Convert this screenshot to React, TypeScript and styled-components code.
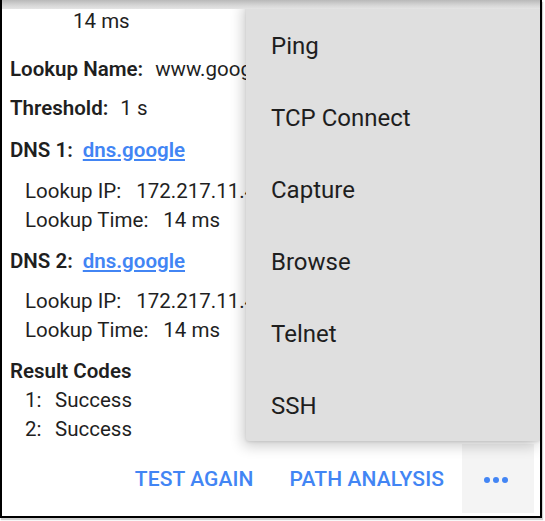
import React from 'react';
import styled, { createGlobalStyle } from 'styled-components';

const GlobalStyle = createGlobalStyle`
  html, body {
    margin: 0;
    padding: 0;
    background: #ffffff;
  }
  body {
    font-family: Roboto, "Liberation Sans", Arial, sans-serif;
    color: #1f1f1f;
  }
`;

const Page = styled.div`
  width: 545px;
  height: 521px;
  overflow: hidden;
  background: #ffffff;
`;

const Frame = styled.div`
  position: relative;
  box-sizing: border-box;
  width: 542px;
  height: 518px;
  border: 2px solid #000;
  border-top: none;
  box-shadow: 1px 2px 1px rgba(0, 0, 0, 0.18);
  display: flex;
  flex-direction: column;
  overflow: hidden;
  background: #fff;
`;

const TopShadow = styled.div`
  position: absolute;
  top: 0;
  left: -2px;
  right: -2px;
  height: 9px;
  z-index: 3;
  background: linear-gradient(#b9b9b9, #d6d6d6 60%, #e4e4e4);
`;

const Details = styled.div`
  padding: 7px 0 0 8px;
  font-size: 20.5px;
  line-height: 29px;
  white-space: nowrap;
`;

const Line = styled.div<{ $indent?: number; $gap?: number }>`
  padding-left: ${(p) => p.$indent ?? 0}px;
  margin-top: ${(p) => p.$gap ?? 0}px;
`;

const Label = styled.span`
  font-weight: 600;
  margin-right: 12px;
`;

const Key = styled.span`
  margin-right: 15px;
`;

const DnsLink = styled.a`
  color: #4285f4;
  font-weight: 600;
  margin-left: -2px;
  text-decoration: underline;
  text-underline-offset: 2px;
`;

const CodeNum = styled.span`
  display: inline-block;
  width: 30px;
`;

const Footer = styled.div`
  margin-top: auto;
  margin-bottom: 3px;
  display: flex;
  justify-content: flex-end;
  padding-right: 6px;
  height: 71px;
`;

const TextButton = styled.button`
  border: none;
  background: transparent;
  padding: 0 18px;
  font-family: Roboto, "Liberation Sans", Arial, sans-serif;
  font-size: 21px;
  font-weight: 500;
  color: #4285f4;
  letter-spacing: 0.1px;
`;

const MoreButton = styled.button`
  width: 72px;
  border: none;
  background: #f4f4f4;
  display: flex;
  align-items: center;
  justify-content: center;
  gap: 3px;
  padding: 2px 4px 0 0;
`;

const Dot = styled.span`
  width: 6px;
  height: 6px;
  border-radius: 50%;
  background: #4285f4;
`;

const Menu = styled.div`
  position: absolute;
  top: 0;
  left: 244px;
  right: 0;
  height: 441px;
  padding-top: 10px;
  box-sizing: border-box;
  background: #dfdfdf;
  border-radius: 0 0 0 3px;
  box-shadow: -3px 5px 14px rgba(0, 0, 0, 0.2), 0 1px 3px rgba(0, 0, 0, 0.1);
  z-index: 2;
`;

const MenuItem = styled.div`
  height: 72px;
  display: flex;
  align-items: center;
  padding-left: 25px;
  font-size: 24px;
  color: #1e1e1e;
`;

const menuItems = ['Ping', 'TCP Connect', 'Capture', 'Browse', 'Telnet', 'SSH'];

export default function App() {
  return (
    <Page>
      <GlobalStyle />
      <Frame>
        <TopShadow />
        <Details>
          <Line $indent={63}>14 ms</Line>
          <Line $gap={19}>
            <Label>Lookup Name:</Label>www.google.com
          </Line>
          <Line $gap={10}>
            <Label>Threshold:</Label>1 s
          </Line>
          <Line $gap={13}>
            <Label>DNS 1:</Label>
            <DnsLink>dns.google</DnsLink>
          </Line>
          <Line $indent={15} $gap={12}>
            <Key>Lookup IP:</Key>172.217.11.4
          </Line>
          <Line $indent={15}>
            <Key>Lookup Time:</Key>14 ms
          </Line>
          <Line $gap={12}>
            <Label>DNS 2:</Label>
            <DnsLink>dns.google</DnsLink>
          </Line>
          <Line $indent={15} $gap={11}>
            <Key>Lookup IP:</Key>172.217.11.4
          </Line>
          <Line $indent={15}>
            <Key>Lookup Time:</Key>14 ms
          </Line>
          <Line $gap={12}>
            <Label>Result Codes</Label>
          </Line>
          <Line $indent={15}>
            <CodeNum>1:</CodeNum>Success
          </Line>
          <Line $indent={15}>
            <CodeNum>2:</CodeNum>Success
          </Line>
        </Details>
        <Footer>
          <TextButton>TEST AGAIN</TextButton>
          <TextButton>PATH ANALYSIS</TextButton>
          <MoreButton>
            <Dot />
            <Dot />
            <Dot />
          </MoreButton>
        </Footer>
        <Menu>
          {menuItems.map((item) => (
            <MenuItem key={item}>{item}</MenuItem>
          ))}
        </Menu>
      </Frame>
    </Page>
  );
}
